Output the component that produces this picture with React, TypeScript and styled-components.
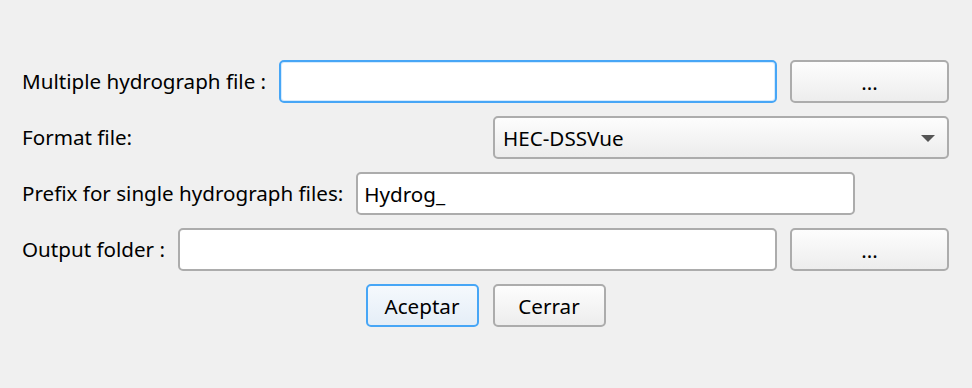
import React from "react";
import styled, { createGlobalStyle } from "styled-components";

const Global = createGlobalStyle`
  html, body { margin: 0; padding: 0; background: #f0f0f0; }
  body { font-family: "Noto Sans", "Open Sans", sans-serif; font-size: 20.6px; color: #000; }
`;

const Form = styled.div`
  width: 972px;
  height: 388px;
  box-sizing: border-box;
  padding: 60px 23px 0 22px;
  display: flex;
  flex-direction: column;
  gap: 13px;
`;

const Row = styled.div`
  display: flex;
  align-items: center;
  gap: 13px;
  height: 43px;
`;

const Label = styled.span`
  white-space: nowrap;
  line-height: 1;
`;

const Spacer = styled.div`
  flex: 1;
`;

const Field = styled.div<{ $focus?: boolean; $width?: number }>`
  box-sizing: border-box;
  height: 43px;
  ${(p) => (p.$width ? `width: ${p.$width}px; flex: none;` : `flex: 1;`)}
  background: #fff;
  border: 2px solid ${(p) => (p.$focus ? "#47a6f6" : "#acacac")};
  ${(p) => (p.$focus ? "box-shadow: inset 0 0 0 1px #d6ebfd;" : "")}
  border-radius: 5px;
  display: flex;
  align-items: center;
  padding: 0 6px;
`;

const Combo = styled.div`
  box-sizing: border-box;
  height: 43px;
  width: 456px;
  margin-left: auto;
  border: 2px solid #acacac;
  border-radius: 5px;
  background: linear-gradient(#fdfdfd, #ececec);
  display: flex;
  align-items: center;
  justify-content: space-between;
  padding: 0 12px 0 8px;
`;

const Arrow = styled.span`
  width: 0;
  height: 0;
  border-left: 7px solid transparent;
  border-right: 7px solid transparent;
  border-top: 7px solid #555;
  margin-top: 2px;
`;

const Button = styled.div<{ $default?: boolean; $width: number }>`
  box-sizing: border-box;
  height: 43px;
  width: ${(p) => p.$width}px;
  flex: none;
  border: 2px solid ${(p) => (p.$default ? "#47a6f6" : "#acacac")};
  border-radius: 5px;
  background: ${(p) =>
    p.$default
      ? "linear-gradient(#f5f9fd, #e5eef7)"
      : "linear-gradient(#fdfdfd, #ededed)"};
  display: flex;
  align-items: center;
  justify-content: center;
`;

const ButtonRow = styled.div`
  display: flex;
  justify-content: center;
  gap: 14px;
  height: 43px;
`;

export default function App() {
  return (
    <>
      <Global />
      <Form>
        <Row>
          <Label>Multiple hydrograph file :</Label>
          <Field $focus />
          <Button $width={159}>...</Button>
        </Row>
        <Row>
          <Label>Format file:</Label>
          <Combo>
            <span>HEC-DSSVue</span>
            <Arrow />
          </Combo>
        </Row>
        <Row>
          <Label>Prefix for single hydrograph files:</Label>
          <Field $width={499}>Hydrog_</Field>
          <Spacer />
        </Row>
        <Row>
          <Label>Output folder :</Label>
          <Field />
          <Button $width={159}>...</Button>
        </Row>
        <ButtonRow>
          <Button $default $width={113}>Aceptar</Button>
          <Button $width={113}>Cerrar</Button>
        </ButtonRow>
      </Form>
    </>
  );
}
